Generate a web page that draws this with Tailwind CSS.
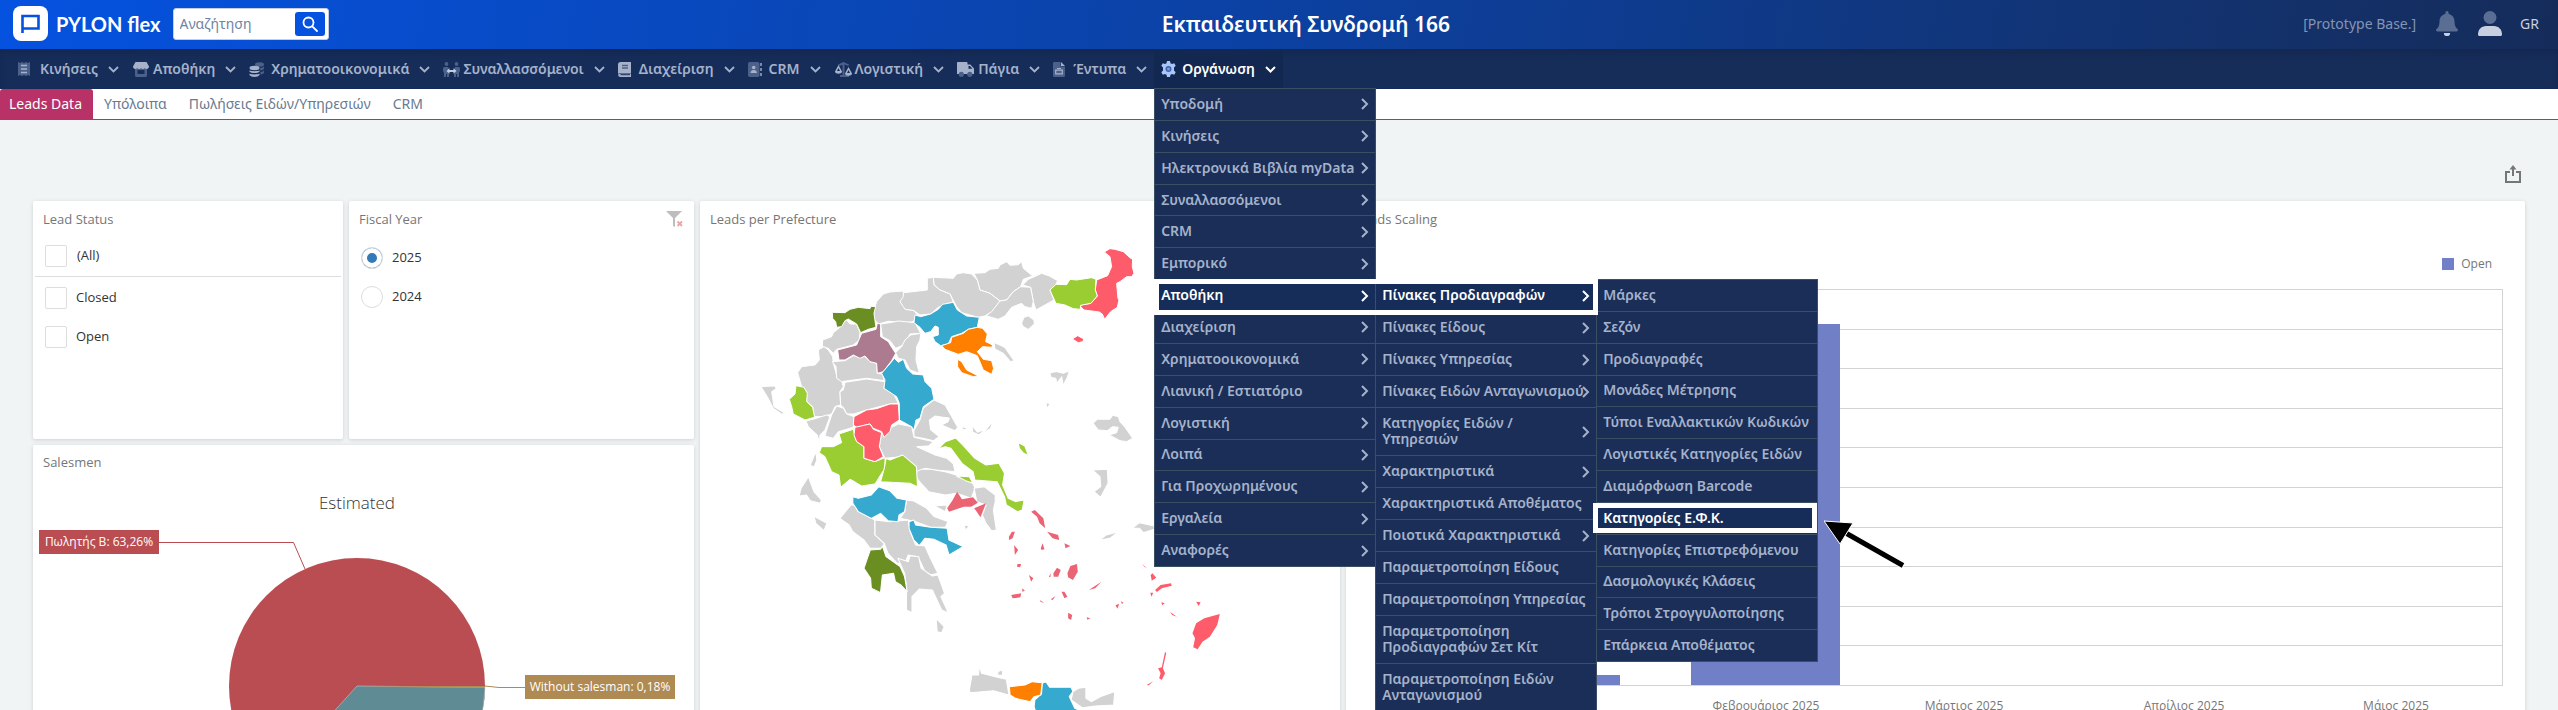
<!DOCTYPE html>
<html lang="el">

<head>
    <meta charset="UTF-8" />
    <meta name="viewport" content="width=device-width, initial-scale=1.0" />
    <title>PYLON flex - Leads Data</title>
    <script src="https://cdn.jsdelivr.net/npm/@tailwindcss/browser@4"></script>
</head>

<body class="h-screen overflow-hidden bg-[#f0f4f5] font-['Noto_Sans',sans-serif]">
    <header
        class="flex h-[49px] items-center bg-[linear-gradient(100deg,#0552e0_0%,#0c409f_52%,#152c5a_100%)] pb-[2px] pl-[13px] pr-[19px]">
        <a href="#" class="flex items-center gap-2 text-white">
            <svg class="h-[35px] w-[35px]" viewBox="0 0 35 35">
                <rect width="35" height="35" rx="8" fill="#fff" />
                <path d="M9.500 27V10H25.500V22.500H9.500" fill="none" stroke="#0552e0" stroke-width="2.600" />
            </svg>
            <span class="font-[Lato,sans-serif] text-xl font-bold leading-6">PYLON flex</span>
        </a>
        <form class="ml-3 flex h-8 w-[156px] items-center rounded-[3px] border border-[#c5cede] bg-white pl-[6px] pr-[3px]">
            <input type="text" placeholder="Αναζήτηση" aria-label="Αναζήτηση"
                class="w-full min-w-0 text-sm text-gray-700 placeholder:text-[#7083a3] focus:outline-none" />
            <button type="button" aria-label="Αναζήτηση"
                class="flex h-6 w-[30px] shrink-0 items-center justify-center rounded-[3px] bg-[#0552e0]">
                <svg class="h-4 w-4" viewBox="0 0 16 16" fill="none" stroke="#fff" stroke-width="1.800" stroke-linecap="round">
                    <circle cx="6.500" cy="6.500" r="5" />
                    <path d="M10.300 10.300 15 15" />
                </svg>
            </button>
        </form>
        <h1 class="flex-1 pr-5 text-center text-[21px] font-semibold leading-7 text-white">Εκπαιδευτική Συνδρομή 166</h1>
        <span class="text-sm text-[#8595b5]">[Prototype Base.]</span>
        <button type="button" aria-label="Ειδοποιήσεις" class="ml-5">
            <svg class="h-[25px] w-[22px]" viewBox="0 0 22 25">
                <path d="M11 0a1.600 1.600 0 0 1 1.600 1.600V3c3.600.7 5.900 3.600 5.900 7.200 0 4 .9 6 3 7.800.9.900.4 2.500-.9 2.500H1.400c-1.300 0-1.800-1.600-.9-2.500 2.100-1.800 3-3.800 3-7.800C3.500 6.600 5.800 3.700 9.400 3V1.600A1.600 1.600 0 0 1 11 0Z"
                    fill="#5a6d92" />
                <path d="M7.800 22h6.400a3.200 3.200 0 0 1-6.400 0Z" fill="#c8cfdf" />
            </svg>
        </button>
        <button type="button" aria-label="Χρήστης" class="ml-5">
            <svg class="h-[25px] w-6" viewBox="0 0 24 25">
                <circle cx="12" cy="6.500" r="6.500" fill="#5a6d92" />
                <path d="M0 23.500C0 18.500 3.500 15 8 15h8c4.500 0 8 3.500 8 8.500 0 .9-.6 1.500-1.500 1.500h-21C.6 25 0 24.400 0 23.500Z" fill="#c8cfdf" />
            </svg>
        </button>
        <button type="button" class="ml-[18px] text-sm text-[#c8cfdf]">GR</button>
    </header>

    <nav class="relative z-20 flex h-10 items-stretch bg-[#162d5a] pl-[11px] text-sm font-semibold text-[#a5b2ca] shadow-[inset_0_4px_6px_rgba(0,0,0,0.12)]">
        <a href="#" class="flex items-center px-[7px]">
            <svg class="mr-2 h-4 w-[14px]" viewBox="0 0 14 16">
                <path d="M0 1l2 1 2-1 2 1 2-1 2 1 2-1v14l-2-1-2 1-2-1-2 1-2-1-2 1Z" fill="#4c618a" />
                <path d="M3 4.500h6M3 8h6M3 11.500h6" stroke="#a5b2ca" stroke-width="1.400" />
            </svg>
            Κινήσεις
            <svg class="ml-[10px] h-[7px] w-[11px]" viewBox="0 0 11 7" fill="none" stroke="currentColor" stroke-width="1.800"><path d="M1 1l4.500 4.500L10 1" /></svg>
        </a>
        <a href="#" class="flex items-center px-[7px]">
            <svg class="mr-[4px] h-[15px] w-4" viewBox="0 0 16 15">
                <path d="M2 6h12v7.500c0 .8-.7 1.500-1.500 1.500h-9C2.700 15 2 14.300 2 13.500Z" fill="#4c618a" />
                <path d="M2.500 0h11L16 4.500c0 1.500-1 2.500-2.300 2.500-.8 0-1.400-.5-1.900-1-.5.5-1.100 1-1.900 1S8.500 6.500 8 6c-.5.5-1.100 1-1.900 1s-1.400-.5-1.900-1c-.5.5-1.100 1-1.900 1C1 7 0 6 0 4.500Z" fill="#a5b2ca" />
                <path d="M4.500 8h7v4h-7Z" fill="#162d5a" />
            </svg>
            Αποθήκη
            <svg class="ml-[10px] h-[7px] w-[11px]" viewBox="0 0 11 7" fill="none" stroke="currentColor" stroke-width="1.800"><path d="M1 1l4.500 4.500L10 1" /></svg>
        </a>
        <a href="#" class="flex items-center px-[6px]">
            <svg class="mr-[6px] h-[15px] w-4" viewBox="0 0 16 15">
                <g fill="#4c618a">
                    <ellipse cx="10.500" cy="2.500" rx="4.500" ry="2.200" />
                    <path d="M11 6c2 0 4-.8 4-2v2.500c0 .8-1.600 1.700-3.500 2ZM11.500 10c2 0 3.500-.8 3.500-2v2.500c0 1-1.600 1.700-3.500 2Z" />
                </g>
                <g fill="#a5b2ca">
                    <ellipse cx="5.500" cy="6" rx="5" ry="2.200" />
                    <path d="M.5 8.300C2 9.500 9 9.500 10.500 8.300v1.500C9 11.500 2 11.500.5 9.800ZM.5 11.500C2 12.700 9 12.700 10.500 11.500V13C9 15.500 2 15.500.5 13Z" />
                </g>
            </svg>
            Χρηματοοικονομικά
            <svg class="ml-[10px] h-[7px] w-[11px]" viewBox="0 0 11 7" fill="none" stroke="currentColor" stroke-width="1.800"><path d="M1 1l4.500 4.500L10 1" /></svg>
        </a>
        <a href="#" class="flex items-center px-[7px]">
            <svg class="mr-[3px] h-[15px] w-[17px]" viewBox="0 0 17 15">
                <g fill="#4c618a">
                    <circle cx="3.500" cy="2" r="1.900" />
                    <circle cx="13.500" cy="2" r="1.900" />
                    <path d="M1 5h4l1 2v8H4v-3H3v3H1V11L0 9V6ZM16 5h-4l-1 2v8h2v-3h1v3h2V11l1-2V6Z" />
                </g>
                <path d="M3.500 9 6.500 6.300v1.800h4V6.300L13.500 9l-3 2.700V9.900h-4v1.800Z" fill="#c3cde0" />
            </svg>
            Συναλλασσόμενοι
            <svg class="ml-[10px] h-[7px] w-[11px]" viewBox="0 0 11 7" fill="none" stroke="currentColor" stroke-width="1.800"><path d="M1 1l4.500 4.500L10 1" /></svg>
        </a>
        <a href="#" class="flex items-center px-[6px]">
            <svg class="mr-[7px] h-[15px] w-[14px]" viewBox="0 0 14 15">
                <path d="M2.500 0H13v11H2.500C1 11 0 12 0 12.800V2.500C0 1 1 0 2.500 0Z" fill="#a5b2ca" />
                <path d="M2.500 11.500H13V15H2.500C-.5 15-.5 11.500 2.500 11.500Z" fill="#a5b2ca" />
                <path d="M2.500 12.700H12" stroke="#162d5a" />
                <path d="M4 3.500h6M4 6h6" stroke="#4c618a" stroke-width="1.300" />
            </svg>
            Διαχείριση
            <svg class="ml-[10px] h-[7px] w-[11px]" viewBox="0 0 11 7" fill="none" stroke="currentColor" stroke-width="1.800"><path d="M1 1l4.500 4.500L10 1" /></svg>
        </a>
        <a href="#" class="flex items-center px-[7px]">
            <svg class="mr-[7px] h-[15px] w-[14px]" viewBox="0 0 14 15">
                <rect width="11.500" height="15" rx="1.800" fill="#4c618a" />
                <circle cx="5.700" cy="5.500" r="1.800" fill="#a5b2ca" />
                <path d="M2.500 11c0-2 1.300-3 3.200-3s3.200 1 3.200 3Z" fill="#a5b2ca" />
                <path d="M13 1v3M13 6v3M13 11v3" stroke="#a5b2ca" stroke-width="1.400" />
            </svg>
            CRM
            <svg class="ml-[10px] h-[7px] w-[11px]" viewBox="0 0 11 7" fill="none" stroke="currentColor" stroke-width="1.800"><path d="M1 1l4.500 4.500L10 1" /></svg>
        </a>
        <a href="#" class="flex items-center px-[7px]">
            <svg class="mr-[3px] h-[15px] w-[17px]" viewBox="0 0 17 15">
                <path d="M3 2.500 8.500 0 14 2.500 13.500 4 9.500 2.500V13H14v2H5v-2h2.500V3L3.500 4Z" fill="#4c618a" />
                <path d="M0 9.500 3.500 3 7 9.500c0 3-7 3-7 0ZM10 11.500 13.500 5l3.500 6.500c0 3-7 3-7 0Z" fill="#a5b2ca" />
                <path d="M2 9l1.500-3L5 9ZM12 11l1.500-3 1.500 3Z" fill="#162d5a" />
            </svg>
            Λογιστική
            <svg class="ml-[10px] h-[7px] w-[11px]" viewBox="0 0 11 7" fill="none" stroke="currentColor" stroke-width="1.800"><path d="M1 1l4.500 4.500L10 1" /></svg>
        </a>
        <a href="#" class="flex items-center px-[6px]">
            <svg class="mr-[4px] h-[15px] w-[17px]" viewBox="0 0 17 15">
                <path d="M1 0h8.500c.6 0 1 .4 1 1v1.500h2.800L17 6.500V12H0V1c0-.6.400-1 1-1Z" fill="#a5b2ca" />
                <path d="M11.500 4h1.500l2.300 2.800h-3.800Z" fill="#162d5a" />
                <circle cx="4.300" cy="12.300" r="2.600" fill="#4c618a" />
                <circle cx="12.800" cy="12.300" r="2.600" fill="#4c618a" />
            </svg>
            Πάγια
            <svg class="ml-[10px] h-[7px] w-[11px]" viewBox="0 0 11 7" fill="none" stroke="currentColor" stroke-width="1.800"><path d="M1 1l4.500 4.500L10 1" /></svg>
        </a>
        <a href="#" class="flex items-center px-[7px]">
            <svg class="mr-[8px] h-[15px] w-3" viewBox="0 0 12 15">
                <path d="M1.500 0H7.500v4.500H12v9c0 .9-.6 1.500-1.500 1.500h-9C.6 15 0 14.400 0 13.500v-12C0 .6.600 0 1.500 0Z" fill="#4c618a" />
                <path d="M8 0l4 4H8Z" fill="#a5b2ca" />
                <path d="M2.700 8.200h6.600v3.600H2.700ZM4 6.500h4" fill="none" stroke="#a5b2ca" stroke-width="1.200" />
            </svg>
            Έντυπα
            <svg class="ml-[10px] h-[7px] w-[11px]" viewBox="0 0 11 7" fill="none" stroke="currentColor" stroke-width="1.800"><path d="M1 1l4.500 4.500L10 1" /></svg>
        </a>

        <div class="relative flex bg-[#132850]">
            <a href="#" class="flex items-center px-[7px] text-white">
                <svg class="mr-[6px] h-4 w-[15px]" viewBox="0 0 15 16">
                    <path d="M6 0h3l.5 2.200 1.500.8 2.200-.8 1.500 2.600L13 6.500v3l1.700 1.700-1.500 2.600-2.200-.8-1.500.8L9 16H6l-.5-2.200L4 13l-2.200.8L.3 11.200 2 9.500v-3L.3 4.800l1.500-2.600L4 3l1.500-.8Z" fill="#a9c6fa" />
                    <circle cx="7.500" cy="8" r="3" fill="#3f63a8" />
                    <circle cx="7.500" cy="8" r="1.500" fill="#7d9cd8" />
                </svg>
                Οργάνωση
                <svg class="ml-[10px] h-[7px] w-[11px]" viewBox="0 0 11 7" fill="none" stroke="currentColor" stroke-width="2"><path d="M1 1l4.500 4.500L10 1" /></svg>
            </a>

            <!-- Organisation menu, rows are populated by JavaScript -->
            <div class="absolute left-0 top-[39px] w-[222px]">
                <ul id="menuMain" class="grid h-[479px] auto-rows-fr border-x border-b border-[#3a5062] bg-[#1a2e57]"></ul>
                <div class="absolute left-[221px] top-[191px] w-[222px]">
                    <ul id="menuStock" class="border border-t-0 border-[#3a5062] bg-[#1a2e57]"></ul>
                    <div class="absolute left-[221px] top-0 w-[222px]">
                        <ul id="menuSpecs" class="grid h-[383px] auto-rows-fr border-x border-b border-[#3a5062] bg-[#1a2e57]"></ul>
                        <div class="pointer-events-none absolute -left-[3px] top-[224px] h-[30px] w-[224px] border-5 border-white"></div>
                        <svg class="pointer-events-none absolute left-[228px] top-[240px] h-[50px] w-[84px]" viewBox="0 0 84 50">
                            <path d="M20 13 80 47" stroke="#fff" stroke-width="7" />
                            <path d="M20 13 79 46.500" stroke="#000" stroke-width="5" />
                            <path d="M0 2 29 4 16 25Z" stroke="#fff" stroke-width="1" />
                        </svg>
                    </div>
                </div>
                <div class="pointer-events-none absolute left-0 top-[191px] h-[36px] w-[444px] border-5 border-white"></div>
            </div>
        </div>
    </nav>

    <div class="flex h-[31px] items-stretch border-b border-[#b83268] bg-white text-sm text-[#697a90]">
        <a href="#" class="flex items-center rounded-t-[3px] bg-[#b83268] pl-[9px] pr-[11px] text-white">Leads Data</a>
        <a href="#" class="flex items-center px-[11px]">Υπόλοιπα</a>
        <a href="#" class="flex items-center px-[11px]">Πωλήσεις Ειδών/Υπηρεσιών</a>
        <a href="#" class="flex items-center px-[11px]">CRM</a>
    </div>

    <main class="px-[33px] font-['Open_Sans',sans-serif] text-[13px] text-[#333]">
        <div class="flex h-[81px] items-end justify-end pb-[18px] pr-1">
            <button type="button" aria-label="Εξαγωγή">
                <svg class="h-[18px] w-4" viewBox="0 0 16 18" fill="none" stroke="#767676" stroke-width="2">
                    <path d="M5 7H1v10h14V7h-4M8 11V2" />
                    <path d="M4.500 4.500 8 0l3.500 4.500Z" fill="#767676" stroke="none" />
                </svg>
            </button>
        </div>

        <div class="grid grid-cols-[661fr_640fr_1179fr] gap-[6px]">
            <div class="flex flex-col gap-[6px]">
                <div class="grid grid-cols-[310fr_345fr] gap-[6px]">
                    <section class="h-[238px] rounded-[2px] bg-white shadow-[0_1px_4px_rgba(0,0,0,0.15)]">
                        <h2 class="px-[10px] pt-2 leading-5 text-[#767676]">Lead Status</h2>
                        <div class="mx-[2px] mt-2 border-b border-[#ddd] px-[10px] pb-[9px] pt-2">
                            <label class="flex items-center gap-[10px]">
                                <input type="checkbox" class="h-[22px] w-[22px] appearance-none rounded-[2px] border border-[#ddd]" />(All)
                            </label>
                        </div>
                        <div class="flex flex-col gap-[17px] px-3 pt-[10px]">
                            <label class="flex items-center gap-[9px]">
                                <input type="checkbox" class="h-[22px] w-[22px] appearance-none rounded-[2px] border border-[#ddd]" />Closed
                            </label>
                            <label class="flex items-center gap-[9px]">
                                <input type="checkbox" class="h-[22px] w-[22px] appearance-none rounded-[2px] border border-[#ddd]" />Open
                            </label>
                        </div>
                    </section>
                    <section class="h-[238px] rounded-[2px] bg-white shadow-[0_1px_4px_rgba(0,0,0,0.15)]">
                        <div class="flex items-start justify-between pl-[10px] pr-[11px] pt-2">
                            <h2 class="leading-5 text-[#767676]">Fiscal Year</h2>
                            <button type="button" aria-label="Clear filter" class="pt-[2px]">
                                <svg class="h-4 w-[17px]" viewBox="0 0 17 16">
                                    <path d="M0 0h16L9 7v9l-2-1V7Z" fill="#bdbdbd" />
                                    <path d="M11.500 10.500l4.500 4.500M16 10.500 11.500 15" stroke="#eda3a3" stroke-width="1.800" />
                                </svg>
                            </button>
                        </div>
                        <div class="flex flex-col gap-[17px] px-3 pt-[18px]">
                            <label class="flex items-center gap-[9px]">
                                <input type="radio" name="fiscalYear" checked
                                    class="h-[22px] w-[22px] appearance-none rounded-full border border-[#ddd] shadow-[inset_0_0_0_5px_white] checked:bg-[#337ab7]" />2025
                            </label>
                            <label class="flex items-center gap-[9px]">
                                <input type="radio" name="fiscalYear"
                                    class="h-[22px] w-[22px] appearance-none rounded-full border border-[#ddd] shadow-[inset_0_0_0_5px_white] checked:bg-[#337ab7]" />2024
                            </label>
                        </div>
                    </section>
                </div>

                <section class="rounded-[2px] bg-white shadow-[0_1px_4px_rgba(0,0,0,0.15)]">
                    <h2 class="px-[10px] pt-[7px] leading-5 text-[#767676]">Salesmen</h2>
                    <svg class="w-full" viewBox="0 0 661 373">
                        <text x="324" y="37" text-anchor="middle" font-size="17" font-weight="300" fill="#333">Estimated</text>
                        <circle cx="324" cy="214" r="128" fill="#ba4d51" />
                        <path d="M324 214 452 215.500A128 128 0 0 1 238 308.700Z" fill="#5f8b95" stroke="#cfd8da" stroke-width="0.500" />
                        <path d="M324 214H452V215.500Z" fill="#af8a53" />
                        <path d="M126 70.500H260.500L272 97" fill="none" stroke="#ba4d51" />
                        <path d="M452 214 466 215.500H492" fill="none" stroke="#af8a53" />
                        <rect x="6" y="58" width="120" height="24" fill="#ba4d51" />
                        <text x="66" y="74" text-anchor="middle" font-size="12" fill="#fff">Πωλητής Β: 63,26%</text>
                        <rect x="492" y="203" width="150" height="24" fill="#af8a53" />
                        <text x="567" y="219" text-anchor="middle" font-size="12" fill="#fff">Without salesman: 0,18%</text>
                    </svg>
                </section>
            </div>

            <section class="rounded-[2px] bg-white shadow-[0_1px_4px_rgba(0,0,0,0.15)]">
                <h2 class="px-[10px] pt-2 leading-5 text-[#767676]">Leads per Prefecture</h2>
                <svg class="w-full" viewBox="700 229 640 580" stroke="#fff" stroke-linejoin="round">
                    <!-- mainland -->
                    <g transform="translate(690 190) scale(.3333)" stroke-width="3" fill="#d2d2d2">
                        <path d="M998 285 1015 268 1040 257 1055 250 1078 258 1103 272 1098 283 1080 300 1092 330 1065 345 1038 360 1030 335 1022 292Z" />
                        <path d="M852 250 885 248 900 238 925 235 930 225 950 215 960 226 985 224 995 215 1000 235 1028 258 1000 268 992 290 970 305 950 330 930 333 900 310 870 300 862 270Z" />
                        <path d="M890 378 910 355 930 333 950 330 970 305 992 290 1022 292 1030 335 1025 355 1005 350 995 340 965 352 945 378 925 388Z" />
                        <path d="M730 262 790 265 800 252 820 248 845 252 862 270 870 300 900 310 930 333 905 365 885 378 865 382 840 375 815 368 800 350 780 312 750 300 732 285Z" />
                        <path d="M712 265 730 262 732 285 750 300 780 312 790 335 770 342 745 352 722 372 690 375 672 362 640 358 630 335 640 308 668 305 712 300Z" />
                        <path d="M560 335 580 312 600 306 640 303 640 320 630 335 645 358 672 362 682 375 670 395 650 398 595 394 565 402 550 385 552 360Z" />
                        <path d="M397 470 398 450 425 440 430 428 450 412 468 388 480 402 500 402 510 428 508 450 490 465 440 478 430 490 415 475Z" />
                        <path d="M572 402 600 398 625 393 675 398 692 430 660 432 640 465 617 475 600 452 577 440Z" />
                        <path d="M692 430 690 450 680 470 678 510 688 550 660 540 645 510 625 505 617 488 635 470 645 450 662 435Z" />
                        <path d="M912 458 930 465 945 473 972 512 962 515 940 490 915 477Z" />
                        <path d="M995 400 1002 382 1015 378 1032 390 1033 402 1015 418 1000 410Z" />
                        <path d="M323 548 335 530 375 525 388 510 385 480 402 470 415 480 428 500 430 520 442 562 455 572 460 590 450 605 452 645 435 650 425 672 400 680 372 680 368 650 350 635 350 605 335 590Z" />
                        <path d="M427 515 465 512 490 497 525 500 540 515 560 520 562 550 577 552 583 572 530 565 475 572 455 575 440 565 438 530Z" />
                        <path d="M465 577 530 567 585 575 582 595 610 610 625 640 600 642 530 660 492 672 470 672 462 655 452 645 450 605 460 600Z" />
                        <path d="M732 630 765 645 785 680 803 712 795 722 755 705 775 695 778 684 760 682 735 678 718 690 722 720 747 740 730 752 700 745 672 740 672 722 690 690 700 655Z" />
                        <path d="M213 590 255 588 258 596 245 605 252 650 285 670 275 672 250 655 232 620Z" />
                        <path d="M348 693 375 686 410 675 420 680 405 720 390 735 388 757 382 735 355 710Z" />
                        <path d="M410 720 425 675 440 648 460 655 470 672 492 680 490 712 445 725 430 745 405 738Z" />
                        <path d="M575 728 605 712 625 702 665 710 672 742 730 755 715 768 680 770 735 795 770 805 790 822 795 845 735 840 705 835 683 845 660 825 640 800 585 805 568 770Z" />
                        <path d="M1080 548 1100 545 1120 550 1138 543 1132 562 1120 585 1115 560 1100 580 1098 565 1083 562Z" />
                        <path d="M1210 700 1222 688 1260 688 1268 676 1285 680 1290 695 1305 712 1328 745 1310 755 1290 752 1258 735 1280 728 1285 712 1268 710 1252 722 1225 720Z" />
                        <path d="M848 712 862 728 880 722 866 733 850 725ZM818 712 830 716 820 718ZM888 722 905 700 900 715ZM1070 640 1078 642 1072 652Z" stroke="none" />
                        <path d="M1243 186 1260 176 1275 178 1300 185 1322 205 1328 207 1327 230 1332 250 1325 260 1310 260 1290 275 1280 280 1284 325 1287 330 1282 352 1262 365 1244 388 1237 372 1228 366 1182 360 1172 350 1176 344 1203 340 1222 318 1216 300 1220 270 1253 257 1265 230 1260 200Z" fill="#ff5c6b" />
                        <path d="M1147 447 1163 437 1182 447 1178 455 1165 458Z" fill="#ff5c6b" />
                        <path d="M1080 300 1098 283 1130 284 1140 268 1160 270 1205 263 1218 268 1216 300 1222 318 1203 340 1172 346 1171 358 1150 356 1125 345 1098 340 1088 318Z" fill="#9acd32" />
                        <path d="M427 367 465 368 480 358 505 352 540 356 543 349 557 350 552 370 558 412 535 418 512 428 500 402 475 387 465 392 455 410 440 412 437 395 428 385Z" fill="#6b8e23" />
                        <path d="M443 480 500 465 515 430 558 418 562 400 572 402 572 440 595 455 605 472 617 490 605 512 580 545 562 550 560 520 540 515 525 498 510 505 490 495 465 510 447 510Z" fill="#ad7b90" />
                        <path d="M672 398 675 375 692 380 722 372 745 358 758 343 790 337 802 360 830 378 868 382 862 412 835 418 815 430 785 440 775 462 752 467 735 455 728 440 745 435 745 412 735 408 722 425 705 430 690 412Z" fill="#36a9cf" />
                        <path d="M755 467 782 458 785 442 820 430 835 418 862 412 878 415 892 432 887 455 908 465 905 472 878 470 862 485 880 508 905 512 911 535 905 553 880 540 862 497 830 485 805 493 765 478ZM803 508 815 515 830 540 865 558 850 560 815 548 803 530Z" fill="#ff8000" />
                        <path d="M298 628 315 612 318 587 342 592 352 610 350 635 368 652 374 682 345 690 310 672 305 650Z" fill="#9acd32" />
                        <path d="M575 550 605 515 613 505 625 517 640 508 650 535 668 552 700 555 705 575 725 595 732 628 700 650 690 685 678 690 672 720 665 710 628 690 628 640 620 620 582 595 585 570Z" fill="#36a9cf" />
                        <path d="M447 732 490 718 495 740 500 755 522 770 522 805 555 815 585 803 585 835 575 850 555 882 515 888 485 870 480 868 452 892 447 855 425 845 405 800 388 788 395 770 430 770 455 758Z" fill="#9acd32" />
                        <path d="M492 680 530 660 560 656 600 642 625 642 628 690 605 705 600 725 582 742 575 725 550 715 540 702 500 712 490 705Z" fill="#ff5c6b" />
                        <path d="M495 712 540 702 550 718 575 728 568 770 580 800 555 815 522 805 522 770 500 755 492 735Z" fill="#ff5c6b" />
                    </g>
                    <!-- south and islands -->
                    <g transform="translate(690 440) scale(.37 .3333)" stroke-width="3" fill="#d2d2d2">
                        <path d="M605 98 625 88 650 88 690 95 720 105 765 130 770 145 760 175 720 160 690 165 645 155 620 125Z" />
                        <path d="M768 145 795 140 825 165 825 185 820 210 828 270 815 272 800 250 790 225 800 195 775 185Z" />
                        <path d="M585 180 605 183 640 205 660 230 697 245 690 262 650 262 610 245 568 235 580 215ZM660 198 695 195 690 215Z" />
                        <path d="M435 195 445 195 455 215 490 235 500 240 500 285 525 310 520 325 487 325 470 300 440 275 430 255 405 235Z" />
                        <path d="M500 240 540 245 590 240 595 275 610 315 635 318 650 355 670 400 650 405 635 395 625 370 615 350 590 345 580 370 560 370 535 340 525 310 500 285Z" />
                        <path d="M562 355 590 365 595 347 618 350 625 385 655 408 670 405 688 460 678 470 698 518 680 510 655 450 620 447 600 470 600 518 585 510 585 440 580 400Z" />
                        <path d="M665 535 687 560 680 578 668 575ZM295 168 300 145 320 110 335 155 355 180 352 190 325 182 315 165ZM325 75 340 35 343 60 335 82ZM335 228 345 235 370 250 362 272 340 250Z" />
                        <path d="M1088 90 1128 88 1130 130 1110 172 1092 155 1110 140 1108 110ZM1108 300 1125 285 1158 275 1135 295ZM1195 265 1215 248 1255 258 1255 268 1225 278 1215 265ZM740 255 755 258 745 270Z" />
                        <path d="M755 750 762 705 780 705 782 675 788 700 830 712 855 718 862 765 820 752 757 758ZM832 695 845 690 845 705 832 706Z" />
                        <path d="M1035 755 1050 745 1070 742 1070 775 1085 785 1110 770 1148 755 1145 795 1095 798 1060 803 1030 780Z" />
                        <path d="M530 55 540 60 575 45 612 80 615 140 595 130 515 125 525 85Z" fill="#9acd32" />
                        <path d="M655 32 675 22 690 5 718 -6 737 15 770 55 800 75 835 70 850 100 845 135 860 175 880 185 903 180 898 210 885 215 855 195 850 170 830 125 770 120 765 95 735 70 705 25 690 20Z" fill="#9acd32" />
                        <path d="M720 108 755 110 765 130 745 122ZM887 8 905 18 915 47 900 38 890 25Z" fill="#9acd32" />
                        <path d="M440 170 455 175 490 165 510 140 540 152 560 175 585 180 580 215 565 225 562 245 535 242 515 220 490 235 455 215 440 190Z" fill="#36a9cf" />
                        <path d="M592 245 605 240 610 255 650 262 695 265 700 300 738 320 700 345 692 315 660 298 635 295 620 317 605 300 592 265Z" fill="#36a9cf" />
                        <path d="M487 330 515 328 520 318 530 350 568 380 580 410 587 455 570 435 555 425 550 400 520 405 515 458 490 445 488 415 470 385Z" fill="#6b8e23" />
                        <path d="M952 730 962 725 972 742 1030 742 1035 755 1025 770 1040 805 1060 815 1050 840 940 835 930 800 932 780 950 762Z" fill="#36a9cf" />
                        <path d="M863 740 905 735 925 725 952 728 948 765 930 770 920 785 880 775 865 765Z" fill="#ff8000" />
                        <g fill="#ea6474" stroke="none">
                            <path d="M695 205 710 180 722 155 735 178 765 172 778 188 760 200 740 200 700 215ZM768 205 800 190 785 232 775 215Z" />
                            <path d="M922 215 932 210 955 235 960 265 945 250 938 230ZM965 275 995 285 998 300 980 295ZM862 290 870 275 878 275 872 295 862 300ZM1012 310 1028 318 1015 325ZM948 325 953 310 958 328 950 330ZM876 315 887 330 878 345ZM885 372 895 372 892 382 884 380ZM916 405 928 415 922 425ZM982 400 992 383 1002 390 995 410 983 410ZM1020 400 1028 378 1046 372 1048 395 1035 420 1022 412Z" />
                            <path d="M868 465 895 460 893 472 872 475ZM898 445 905 452 898 455ZM1004 455 1012 455 1020 470 1012 475ZM1078 450 1112 425 1095 445ZM1022 518 1033 525 1030 540 1022 535ZM1072 532 1082 535 1074 539ZM945 480 957 488 948 486ZM975 478 988 468 980 480ZM970 410 975 400 974 412Z" />
                        </g>
                        <g fill="#ff5c6b" stroke="none">
                            <path d="M1358 580 1368 550 1390 535 1432 522 1425 555 1405 590 1385 605 1372 628 1360 622 1365 595Z" />
                            <path d="M1257 450 1272 435 1300 430 1302 437 1275 445 1262 456ZM1245 405 1250 400 1260 413 1248 422ZM1222 372 1235 385 1228 380ZM1244 458 1252 458 1247 470ZM1274 487 1283 490 1276 496ZM1298 516 1316 530 1303 525ZM1368 485 1380 487 1375 498ZM1284 635 1287 640 1278 685 1284 700 1275 720 1268 715 1272 700 1265 685 1275 682ZM1234 735 1252 724 1240 736ZM1150 495 1160 492 1155 506ZM1165 484 1172 488 1167 492Z" />
                        </g>
                    </g>
                </svg>
            </section>

            <section class="rounded-[2px] bg-white shadow-[0_1px_4px_rgba(0,0,0,0.15)]">
                <h2 class="px-[10px] pt-2 leading-5 text-[#767676]">Leads Scaling</h2>
                <div class="flex items-center justify-end gap-[7px] pr-[33px] pt-[25px] text-xs leading-5 text-[#767676]">
                    <span class="h-3 w-3 bg-[#7180c6]"></span>Open
                </div>
                <svg id="leadsScaling" class="w-full" viewBox="0 0 1179 500" fill="none" stroke="#d3d3d3"></svg>
            </section>
        </div>
    </main>

    <script>
        const menuMain = [
            ["Υποδομή", true], ["Κινήσεις", true], ["Ηλεκτρονικά Βιβλία myData", true], ["Συναλλασσόμενοι", true], ["CRM", true],
            ["Εμπορικό", true], ["Αποθήκη", true], ["Διαχείριση", true], ["Χρηματοοικονομικά", true], ["Λιανική / Εστιατόριο", true],
            ["Λογιστική", true], ["Λοιπά", true], ["Για Προχωρημένους", true], ["Εργαλεία", true], ["Αναφορές", true],
        ];

        const menuStock = [
            ["Πίνακες Προδιαγραφών", true], ["Πίνακες Είδους", true], ["Πίνακες Υπηρεσίας", true], ["Πίνακες Ειδών Ανταγωνισμού", true],
            ["Κατηγορίες Ειδών / Υπηρεσιών", true], ["Χαρακτηριστικά", true], ["Χαρακτηριστικά Αποθέματος", false],
            ["Ποιοτικά Χαρακτηριστικά", true], ["Παραμετροποίηση Είδους", false], ["Παραμετροποίηση Υπηρεσίας", false],
            ["Παραμετροποίηση Προδιαγραφών Σετ Κίτ", false], ["Παραμετροποίηση Ειδών Ανταγωνισμού", false],
        ];

        const menuSpecs = [
            ["Μάρκες", false], ["Σεζόν", false], ["Προδιαγραφές", false], ["Μονάδες Μέτρησης", false],
            ["Τύποι Εναλλακτικών Κωδικών", false], ["Λογιστικές Κατηγορίες Ειδών", false], ["Διαμόρφωση Barcode", false],
            ["Κατηγορίες Ε.Φ.Κ.", false], ["Κατηγορίες Επιστρεφόμενου", false], ["Δασμολογικές Κλάσεις", false],
            ["Τρόποι Στρογγυλοποίησης", false], ["Επάρκεια Αποθέματος", false],
        ];

        function renderMenu(id, items, active) {
            document.getElementById(id).innerHTML = items
                .map(
                    ([label, hasChildren]) => `
                <li class="relative flex items-center border-t border-[#3a5062] ${label === active ? "bg-[#162d5a] text-white" : ""}">
                    <a href="#" class="w-full px-[6px] pb-2 pt-[7px] leading-4">${label}</a>
                    ${hasChildren ? `<svg class="absolute right-[6px] h-3 w-2" viewBox="0 0 8 12" fill="none" stroke="currentColor" stroke-width="2"><path d="M1 1l5 5L1 11" /></svg>` : ""}
                </li>`,
                )
                .join("");
        }

        function renderScaling() {
            let out = "";
            for (let i = 0; i <= 10; i++) {
                const y = Math.round(15 + i * 39.6) + 0.5;
                out += `<path d="M60 ${y}H1157" />`;
            }
            out += `<path d="M1156.500 15V411" />`;
            out += `<path d="M126 401H274V411H126ZM345 50H494V411H345Z" fill="#7180c6" stroke="none" />`;
            [["Ιανουάριος 2025", 200], ["Φεβρουάριος 2025", 420], ["Μάρτιος 2025", 618], ["Απρίλιος 2025", 838], ["Μάιος 2025", 1050]].forEach(([label, x]) => {
                out += `<text x="${x}" y="436" text-anchor="middle" font-size="12" fill="#767676" stroke="none">${label}</text>`;
            });
            document.getElementById("leadsScaling").innerHTML = out;
        }

        renderMenu("menuMain", menuMain, "Αποθήκη");
        renderMenu("menuStock", menuStock, "Πίνακες Προδιαγραφών");
        renderMenu("menuSpecs", menuSpecs, "Κατηγορίες Ε.Φ.Κ.");
        renderScaling();
    </script>
</body>

</html>
